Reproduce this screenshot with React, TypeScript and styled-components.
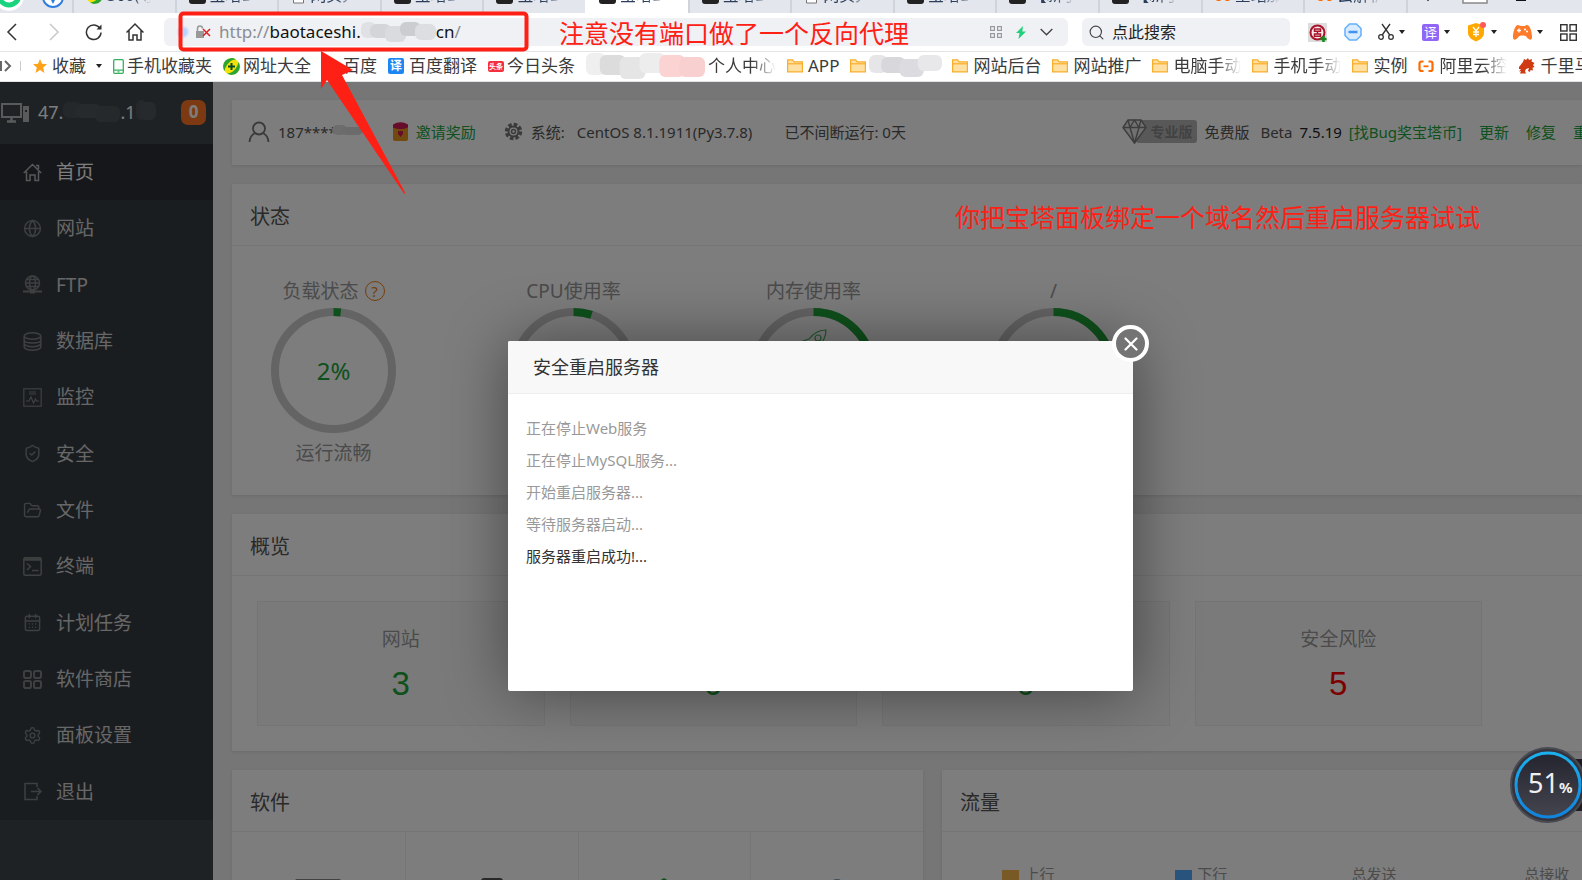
import React from "react";
import styled, { createGlobalStyle, css } from "styled-components";
import {
  Search, Globe, ShieldCheck, FolderOpen, CalendarDays, Settings,
} from "lucide-react";

const Global = createGlobalStyle`
  *, *::before, *::after { box-sizing: border-box; }
  html, body { margin: 0; padding: 0; }
  body {
    font-family: "Noto Sans", "Noto Sans CJK SC", sans-serif;
    font-size: 15px;
    line-height: 20px;
    color: #333;
    background: #fff;
    overflow: hidden;
  }
  button, input { font: inherit; color: inherit; }
  svg { display: block; flex: none; }
`;

const Window = styled.div`
  position: relative;
  display: flex;
  flex-direction: column;
  height: 100vh;
  overflow: hidden;
`;

/* ---------- browser chrome ---------- */

const TabStrip = styled.div`
  flex: none;
  display: flex;
  align-items: flex-end;
  height: 13px;
  overflow: hidden;
  background: #e3e6ec;
`;
const StripStart = styled.div`
  flex: none;
  display: flex;
  align-items: center;
  gap: 17px;
  width: 72px;
  height: 36px;
`;
const TabList = styled.div`
  flex: 1;
  display: flex;
`;
const Tab = styled.button<{ $active?: boolean }>`
  flex: 1 1 0;
  min-width: 0;
  display: flex;
  align-items: center;
  gap: 4px;
  height: 36px;
  padding: 0 0 0 12px;
  border: 0;
  border-left: 2px solid ${(p) => (p.$active ? "#fff" : "#cfd3da")};
  background: ${(p) => (p.$active ? "#fff" : "transparent")};
  color: #2b3f5c;
  font-size: 16px;
  text-align: left;
  white-space: nowrap;
  overflow: hidden;
`;
const TabText = styled.span`
  width: 44px;
  overflow: hidden;
  mask-image: linear-gradient(90deg, #000 60%, transparent);
`;
const StripEnd = styled.div`
  flex: none;
  display: flex;
  align-items: center;
  gap: 26px;
  width: 176px;
  height: 36px;
  padding-left: 12px;
  border-left: 2px solid #cfd3da;
`;

const NavBar = styled.div`
  flex: none;
  display: flex;
  align-items: center;
  height: 39px;
  padding: 0 5px 0 3px;
  border-bottom: 1px solid #e4e4e4;
  background: #fff;
`;
const IconButton = styled.button`
  display: flex;
  align-items: center;
  justify-content: center;
  gap: 5px;
  padding: 0;
  border: 0;
  background: none;
`;
const History = styled.div`
  display: grid;
  grid-template-columns: repeat(4, 41px);
  justify-items: start;
  width: 161px;
`;
const AddressBar = styled.div`
  flex: 1;
  display: flex;
  align-items: center;
  height: 28px;
  padding: 0 15px 0 13px;
  border-radius: 6px;
  background: #eff1f4;
`;
const Url = styled.div`
  flex: 1;
  display: flex;
  align-items: center;
  margin-left: 8px;
  color: #111;
  font-size: 17px;
  line-height: 24px;
`;
const Faint = styled.span`color: #8a8d92;`;
const AddressTools = styled.div`
  display: flex;
  align-items: center;
  gap: 14px;
`;
const SearchBox = styled.label`
  display: flex;
  align-items: center;
  gap: 7px;
  width: 208px;
  height: 28px;
  margin-left: 14px;
  padding-left: 6px;
  border-radius: 6px;
  background: #eff1f4;
`;
const SearchInput = styled.input`
  flex: 1;
  min-width: 0;
  padding: 0;
  border: 0;
  outline: 0;
  background: none;
  font-size: 16px;
  &::placeholder { color: #222; opacity: 1; }
`;
const Extensions = styled.div`
  display: flex;
  align-items: center;
  justify-content: space-between;
  width: 269px;
  margin-left: 18px;
`;
const Badge = styled.span`
  width: 17px;
  height: 17px;
  border-radius: 2px;
  background: #9166f7;
  color: #fff;
  font-size: 13px;
  line-height: 17px;
  text-align: center;
`;

const Bookmarks = styled.nav`
  flex: none;
  display: flex;
  align-items: center;
  gap: 11px;
  height: 30px;
  overflow: hidden;
  padding-bottom: 1px;
  border-bottom: 1px solid #dfe3e6;
  background: #fff;
`;
const BookmarkLead = styled.div`
  flex: none;
  display: flex;
  align-items: center;
  gap: 8px;
  width: 22px;
`;
const Bookmark = styled.a<{ $width?: number; $narrow?: boolean }>`
  flex: none;
  display: flex;
  align-items: center;
  gap: ${(p) => (p.$narrow ? 3 : 5)}px;
  width: ${(p) => (p.$width ? `${p.$width}px` : "auto")};
  color: #3b3b3b;
  font-size: 17px;
  line-height: 28px;
  white-space: nowrap;
  text-decoration: none;
`;
const BookmarkText = styled.span<{ $fade?: boolean }>`
  ${(p) => p.$fade && css`mask-image: linear-gradient(90deg, #000 65%, transparent);`}
`;
const SquareIcon = styled.span<{ $bg: string; $small?: boolean }>`
  width: 16px;
  height: ${(p) => (p.$small ? 11 : 16)}px;
  border-radius: 2px;
  background: ${(p) => p.$bg};
  color: #fff;
  font-size: ${(p) => (p.$small ? 7 : 12)}px;
  font-weight: 700;
  line-height: ${(p) => (p.$small ? 11 : 16)}px;
  text-align: center;
`;

/* ---------- panel ---------- */

const Panel = styled.div`
  position: relative;
  flex: 1;
  display: flex;
  min-height: 0;
  overflow: hidden;
  background: #f0f0f0;
`;
const Sidebar = styled.aside`
  flex: none;
  width: 213px;
  background: #3d474c;
`;
const Host = styled.div`
  display: flex;
  align-items: center;
  height: 62px;
  padding: 0 7px 2px 0;
  color: #fff;
  font-size: 18px;
  line-height: 28px;
`;
const HostName = styled.span`
  flex: 1;
  display: flex;
  align-items: center;
  margin-left: 9px;
`;
const HostCount = styled.span`
  width: 25px;
  height: 25px;
  border-radius: 7px;
  background: #ff7425;
  font-weight: 700;
  font-size: 17px;
  line-height: 24px;
  text-align: center;
`;
const Menu = styled.ul`
  display: grid;
  grid-auto-rows: 1fr;
  height: 676px;
  margin: 0;
  padding: 0;
  list-style: none;
  background: #363c43;
`;
const MenuLink = styled.a<{ $active?: boolean }>`
  display: flex;
  align-items: center;
  gap: 14px;
  height: 100%;
  padding-left: 23px;
  background: ${(p) => (p.$active ? "#2d3036" : "transparent")};
  color: ${(p) => (p.$active ? "#fff" : "#d2d2d2")};
  font-size: 19px;
  line-height: 28px;
  text-decoration: none;
  svg { color: ${(p) => (p.$active ? "#b4b4b4" : "#7e8082")}; }
`;

const Main = styled.main`
  flex: 1;
  display: flex;
  flex-direction: column;
  gap: 19px;
  min-width: 0;
  padding: 18px 0 0 19px;
  white-space: nowrap;
`;
const Card = styled.section`
  flex: none;
  min-width: 0;
  overflow: hidden;
  background: #fff;
  box-shadow: 0 1px 3px rgba(0, 0, 0, 0.1);
`;
const CardTitle = styled.h2`
  margin: 0;
  padding-left: 18px;
  height: 62px;
  border-bottom: 1px solid #eee;
  color: #555;
  font-size: 20px;
  font-weight: 400;
  line-height: 65px;
`;
const InfoBar = styled(Card)`
  display: flex;
  align-items: center;
  height: 65px;
  padding: 0 0 2px 16px;
  color: #555;
`;
const InfoItem = styled.span<{ $gap?: number }>`
  display: flex;
  align-items: center;
  gap: 8px;
  margin-left: ${(p) => p.$gap ?? 0}px;
`;
const Account = styled.span`
  display: flex;
  align-items: center;
  svg { margin-left: -5px; }
`;
const Actions = styled.div`
  display: flex;
  align-items: center;
  gap: 17px;
  margin-left: auto;
  margin-right: -21px;
`;
const Version = styled.span`
  display: flex;
  gap: 7px;
  b { color: #222; font-weight: 400; }
`;
const Edition = styled.span`margin-right: -6px;`;
const GreenLink = styled.a`
  color: #20a53a;
  text-decoration: none;
`;
const ProTag = styled.span`
  position: relative;
  display: flex;
  width: 61px;
  height: 23px;
  margin-right: -10px;
  margin-left: 12px;
  padding-left: 14px;
  border-radius: 3px;
  background: #b4b4b4;
  color: #888;
  font-size: 14px;
  font-weight: 700;
  line-height: 23px;
  svg { position: absolute; left: -14px; top: -1px; }
`;

const Gauges = styled.div`
  display: flex;
  gap: 37px;
  height: 249px;
  padding-top: 32px;
`;
const Gauge = styled.div`
  display: flex;
  flex-direction: column;
  align-items: center;
  width: 203px;
  color: #999;
  font-size: 19px;
  line-height: 26px;
`;
const GaugeLabel = styled.div`
  display: flex;
  align-items: center;
  gap: 6px;
  margin-bottom: 4px;
`;
const Help = styled.button`
  width: 20px;
  height: 20px;
  padding: 0;
  border: 1px solid #e8811a;
  border-radius: 50%;
  background: none;
  color: #e8811a;
  font-size: 15px;
  line-height: 18px;
`;
const Dial = styled.div`
  display: grid;
  place-items: center;
  margin-bottom: 7px;
  > * { grid-area: 1 / 1; }
`;
const DialValue = styled.span`
  color: #20a53a;
  font-size: 24px;
  line-height: 30px;
`;

const Tiles = styled.div`
  display: grid;
  grid-template-columns: repeat(4, minmax(0, 1fr));
  gap: 25px;
  padding: 25px 100px 25px 25px;
`;
const Tile = styled.div`
  display: flex;
  flex-direction: column;
  align-items: center;
  gap: 13px;
  height: 125px;
  padding-top: 23px;
  border: 1px solid #eee;
  background: #f9f9f9;
  color: #999;
  font-size: 19px;
  line-height: 28px;
`;
const TileValue = styled.span<{ $danger?: boolean }>`
  color: ${(p) => (p.$danger ? "#f00" : "#20a53a")};
  font-family: "Liberation Sans", sans-serif;
  font-size: 33px;
  line-height: 36px;
`;

const Split = styled.div`
  display: grid;
  grid-template-columns: 691fr 640fr;
  gap: 19px;
`;
const SoftGrid = styled.div`
  display: grid;
  grid-template-columns: repeat(4, 1fr);
  height: 173px;
`;
const SoftCell = styled.div`
  display: flex;
  justify-content: center;
  padding-top: 46px;
  & + & { border-left: 1px solid #eee; }
`;
const Traffic = styled.div`
  display: grid;
  grid-template-columns: repeat(4, 27%);
  padding-top: 31px;
  color: #999;
  line-height: 22px;
`;
const Legend = styled.span`
  display: flex;
  justify-content: center;
  gap: 5px;
`;
const Swatch = styled.i<{ $color: string }>`
  width: 17px;
  height: 17px;
  margin-top: 7px;
  background: ${(p) => p.$color};
`;

/* ---------- layers ---------- */

const Shade = styled.div`
  position: absolute;
  inset: 0;
  background: rgba(0, 0, 0, 0.51);
`;
const Dialog = styled.section`
  position: absolute;
  top: 259px;
  left: calc(50% - 283px);
  width: 625px;
  height: 350px;
  border-radius: 2px;
  background: #fff;
  box-shadow: 1px 1px 63px rgba(0, 0, 0, 0.45);
`;
const DialogTitle = styled.h3`
  height: 53px;
  margin: 0;
  padding-left: 25px;
  border-bottom: 1px solid #eee;
  border-radius: 2px 2px 0 0;
  background: #f8f8f8;
  font-size: 18px;
  font-weight: 400;
  line-height: 53px;
`;
const Steps = styled.ol`
  margin: 0;
  padding: 18px;
  line-height: 32px;
  list-style: none;
`;
const Step = styled.li<{ $current?: boolean }>`
  color: ${(p) => (p.$current ? "#333" : "#999")};
`;
const Close = styled.button`
  position: absolute;
  top: -16px;
  right: -16px;
  display: grid;
  place-items: center;
  width: 37px;
  height: 37px;
  padding: 0;
  border: 4px solid #fff;
  border-radius: 50%;
  background: #747474;
`;

const Note = styled.p<{ $top: number; $left: number }>`
  position: absolute;
  top: ${(p) => p.$top}px;
  left: ${(p) => p.$left}px;
  margin: 0;
  color: #ff2015;
  font-size: 25px;
  line-height: 36px;
  white-space: nowrap;
`;
const Marks = styled.svg`
  position: absolute;
  top: 0;
  left: 0;
  pointer-events: none;
`;
const Monitor = styled.div`
  position: absolute;
  top: 747px;
  right: -4px;
`;
const MonitorText = styled.div`
  position: absolute;
  top: 19px;
  left: 18px;
  display: flex;
  align-items: baseline;
  color: #f0f0f0;
  font-size: 27px;
  line-height: 34px;
  small { font-size: 15px; font-weight: 700; }
`;

/* ---------- icons ---------- */

const Caret = () => (
  <svg width="6" height="4" viewBox="0 0 6 4"><path d="M0 0h6L3 4z" fill="#222" /></svg>
);
const Folder = () => (
  <svg width="16" height="14" viewBox="0 0 16 14" fill="#ffe0a3" stroke="#f9ae2b" strokeWidth="1.200">
    <path d="M.6 12.900V.8h5l1.500 2h8.300v10.100z" /><path d="M.6 4.800h14.800" />
  </svg>
);
const BtIcon = () => (
  <svg width="17" height="18" viewBox="0 0 17 18"><rect width="17" height="18" rx="3" fill="#222" /><path d="M4 5h9M4 9h9M8 5v9" stroke="#fff" strokeWidth="1.500" /></svg>
);
const PageIcon = () => (
  <svg width="15" height="17" viewBox="0 0 15 17"><path d="M2.500 1h7l3 3v12h-10z" fill="#fff" stroke="#777" /></svg>
);
const CloudIcon = () => (
  <svg width="16" height="13" viewBox="0 0 16 13" fill="none" stroke="#ff6a00" strokeWidth="2.200">
    <path d="M5.500 1.500H3.500a2 2 0 0 0-2 2v5.500a2 2 0 0 0 2 2h2M10.500 1.500h2a2 2 0 0 1 2 2v5.500a2 2 0 0 1-2 2h-2" /><path d="M5.500 6.300h5" strokeWidth="1.800" />
  </svg>
);
const PlusBall = () => (
  <svg width="17" height="17" viewBox="0 0 17 17">
    <circle cx="8.500" cy="8.500" r="8.300" fill="#f6e00a" />
    <path d="M1.500 13A8.300 8.300 0 0 1 13 1.500C8 1.500 3 6 1.500 13M15.500 4a8.300 8.300 0 0 1-11.500 11.500C9 15.500 14 11 15.500 4" fill="#2aa52f" />
    <path d="M8.500 5v7M5 8.500h7" stroke="#064d1b" strokeWidth="2" />
  </svg>
);
const Star = () => (
  <svg width="14" height="14" viewBox="0 0 14 14"><path d="M7 0l2 4.800 5 .4-3.800 3.400L11.400 14 7 11 2.600 14l1.200-5.400L0 5.200l5-.4z" fill="#ffa21a" /></svg>
);
const Phone = () => (
  <svg width="11" height="15" viewBox="0 0 11 15" fill="none" stroke="#35b15e" strokeWidth="1.300"><rect x=".7" y=".7" width="9.600" height="13.600" rx="1" /><path d="M1 11.200h9M4.500 12.900h2" /></svg>
);
const Horse = () => (
  <svg width="17" height="16" viewBox="0 0 17 16"><path d="M1 9l4-5 1-3 2 1 2-2 1 2 3-1-.5 2.500L16.500 5 15 7l1.500 2-2 .8.500 2.700-2.500-.5-.5 2-2-1 1-3-3 1-1 2 1 2.500H2l1-2.500-2 .5 2-2.500H1z" fill="#cf3a12" /></svg>
);
const ScissorsIcon = () => (
  <svg width="16" height="18" viewBox="0 0 16 18" fill="none" stroke="#333" strokeWidth="1.300">
    <circle cx="3" cy="14" r="2.300" /><circle cx="13" cy="14" r="2.300" /><path d="M4.200 12L12 1M11.800 12L4 1" />
  </svg>
);
const Person = () => (
  <svg width="22" height="22" viewBox="0 0 22 22" fill="none" stroke="#777" strokeWidth="1.800">
    <circle cx="11" cy="7.500" r="6" /><path d="M1.500 21c.3-4.500 2.500-7.500 5.500-9M20.500 21c-.3-4.500-2.500-7.500-5.500-9" />
  </svg>
);
const Diamond = () => (
  <svg width="25" height="25" viewBox="0 0 25 25" fill="#e4e4e4" stroke="#7c7c7c" strokeWidth="1.400" strokeLinejoin="round">
    <path d="M6 1h13l5 7.500L12.500 24 1 8.500z" /><path d="M1 8.500h23M6 1l2 7.500L12.500 24 17 8.500 19 1M8 8.500L12.500 1 17 8.500" fill="none" />
  </svg>
);

const line = { fill: "none", stroke: "currentColor", strokeWidth: 1.500 } as const;
const MenuIcon = ({ name }: { name: string }) => {
  const lucide = { size: 19, strokeWidth: 1.800 };
  switch (name) {
    case "home":
      return <svg width="19" height="19" viewBox="0 0 19 19" {...line}><path d="M.8 10L9.500 1.500 18.200 10M3.500 8.500V17.500H7V12h5v5.500h3.500V8.500M13 2.500h2.500V6" /></svg>;
    case "site": return <Globe {...lucide} />;
    case "ftp":
      return <svg width="19" height="19" viewBox="0 0 19 19" {...line}><circle cx="9.500" cy="8" r="7" /><ellipse cx="9.500" cy="8" rx="3" ry="7" /><path d="M2.500 8h14M3.500 4.500h12M3.500 11.500h12" /><path d="M0 16.500h19" strokeWidth="2" /><path d="M7 16.500h5" strokeWidth="4" /></svg>;
    case "db":
      return <svg width="19" height="19" viewBox="0 0 19 19" {...line}><ellipse cx="9.500" cy="4" rx="8.300" ry="3.200" /><path d="M1.200 4v11c0 1.800 3.700 3.200 8.300 3.200s8.300-1.400 8.300-3.200V4M1.200 8c0 1.800 3.700 3 8.300 3s8.300-1.200 8.300-3M1.200 11.500c0 1.800 3.700 3.200 8.300 3.200s8.300-1.400 8.300-3.200" /></svg>;
    case "monitor":
      return <svg width="19" height="19" viewBox="0 0 19 19" {...line} strokeWidth={1.200}><rect x=".8" y=".8" width="17.400" height="17.400" /><path d="M3 13h3l2-4 2.500 6 2-4 1 2H16M6 4h7M6 6h7" /></svg>;
    case "shield": return <ShieldCheck {...lucide} />;
    case "file": return <FolderOpen {...lucide} />;
    case "terminal":
      return <svg width="19" height="19" viewBox="0 0 19 19" {...line}><rect x=".8" y=".8" width="17.400" height="17.400" rx="1.500" /><path d="M1 2.500h17" strokeWidth="2.500" /><path d="M4 6.500l3.500 3L4 13M9 13.500h6.500" /></svg>;
    case "cron": return <CalendarDays {...lucide} />;
    case "store":
      return <svg width="19" height="19" viewBox="0 0 19 19" {...line} strokeWidth={2}><rect x="1" y="1" width="7" height="7" rx="1.800" /><rect x="11" y="1" width="7" height="7" rx="1.800" /><rect x="1" y="11" width="7" height="7" rx="1.800" /><rect x="11" y="11" width="7" height="7" rx="1.800" /></svg>;
    case "settings": return <Settings {...lucide} />;
    default:
      return <svg width="19" height="19" viewBox="0 0 19 19" {...line}><path d="M14 5V1.500H2v16h12V14M8 9.500h10M14.500 6l3.500 3.500-3.500 3.500" /></svg>;
  }
};

const Smudge = ({ width, height, fills }: { width: number; height: number; fills: string[] }) => (
  <svg width={width} height={height} viewBox={`0 0 ${width} ${height}`}>
    {fills.map((fill, i) => {
      const step = width / fills.length;
      return <rect key={i} x={i * step - (i ? 6 : 0)} y={(i % 3) * 2} width={step + (i ? 6 : 0)} height={height - 4 - (i % 2) * 2} rx="6" fill={fill} />;
    })}
  </svg>
);

const DialRing = ({ value }: { value: number }) => {
  const length = 2 * Math.PI * 58.500;
  return (
    <svg width="125" height="125" viewBox="0 0 125 125" fill="none" strokeWidth="8">
      <circle cx="62.500" cy="62.500" r="58.500" stroke="#ccc" />
      <circle cx="62.500" cy="62.500" r="58.500" stroke="#20a53a" strokeDasharray={`${(length * value) / 100} ${length}`} transform="rotate(-90 62.500 62.500)" />
    </svg>
  );
};

/* ---------- data ---------- */

const tabs: [string, string][] = [
  ["ball", "360(导"], ["bt", "宝塔L"], ["page", "网页大"], ["bt", "宝塔L"], ["bt", "宝塔L"], ["bt", "宝塔L"],
  ["bt", "宝塔L"], ["page", "网页大"], ["bt", "宝塔L"], ["bt", "【新手"], ["bt", "【新手"], ["cloud", "全站加"], ["cloud", "云解析"],
];
const tabIcons: Record<string, React.ReactNode> = { ball: <PlusBall />, bt: <BtIcon />, page: <PageIcon />, cloud: <CloudIcon /> };

const menu: [string, string][] = [
  ["home", "首页"], ["site", "网站"], ["ftp", "FTP"], ["db", "数据库"], ["monitor", "监控"], ["shield", "安全"],
  ["file", "文件"], ["terminal", "终端"], ["cron", "计划任务"], ["store", "软件商店"], ["settings", "面板设置"], ["exit", "退出"],
];

const steps = ["正在停止Web服务", "正在停止MySQL服务...", "开始重启服务器...", "等待服务器启动...", "服务器重启成功!..."];

const FolderLink = ({ text, fade }: { text: string; fade?: boolean }) => (
  <Bookmark href="#"><Folder /><BookmarkText $fade={fade}>{text}</BookmarkText></Bookmark>
);

export default function App() {
  return (
    <Window>
      <Global />
      <TabStrip>
        <StripStart>
          <svg width="25" height="36" viewBox="0 0 25 36"><circle cx="9" cy="19" r="15" fill="#fff" /><circle cx="9" cy="18" r="10" fill="none" stroke="#19d37d" strokeWidth="5" /></svg>
          <svg width="24" height="36" viewBox="0 0 24 36"><circle cx="11" cy="20" r="10" fill="#fff" stroke="#2f7de1" strokeWidth="2" /><path d="M11 27l-4-8h8z" fill="#2f7de1" /></svg>
        </StripStart>
        <TabList role="tablist">
          {tabs.map(([icon, text], i) => (
            <Tab key={i} role="tab" aria-selected={i === 5} $active={i === 5}>
              {tabIcons[icon]}<TabText>{text}</TabText>{i === 5 && <svg width="10" height="10" viewBox="0 0 10 10" stroke="#444" strokeWidth="1.500"><path d="M0 0l10 10M10 0L0 10" /></svg>}
            </Tab>
          ))}
        </TabList>
        <StripEnd>
          <svg width="16" height="16" viewBox="0 0 16 16" stroke="#333" strokeWidth="1.500"><path d="M8 0v14M1 7h14" /></svg>
          <svg width="26" height="18" viewBox="0 0 26 18" fill="#fff" stroke="#888" strokeWidth="1.500"><rect x="1" y="1" width="24" height="16" /><path d="M9 5v9M14 5h4v8h-4z" stroke="#333" /></svg>
          <svg width="14" height="14" viewBox="0 0 14 14"><path d="M2 12h10" stroke="#111" strokeWidth="2" /></svg>
        </StripEnd>
      </TabStrip>

      <NavBar>
        <History>
          <IconButton aria-label="后退"><svg width="20" height="20" viewBox="0 0 20 20" fill="none" stroke="#333" strokeWidth="1.500"><path d="M13 2l-8 8 8 8" /></svg></IconButton>
          <IconButton aria-label="前进"><svg width="20" height="20" viewBox="0 0 20 20" fill="none" stroke="#c8c8c8" strokeWidth="1.500"><path d="M6 2l8 8-8 8" /></svg></IconButton>
          <IconButton aria-label="刷新"><svg width="18" height="20" viewBox="0 0 18 20" fill="none" stroke="#333" strokeWidth="1.500"><path d="M15 6.500a7.300 7.300 0 1 0 1 4" /><path d="M16.500 2.500v5h-5z" fill="#333" stroke="none" /></svg></IconButton>
          <IconButton aria-label="主页"><svg width="18" height="20" viewBox="0 0 18 20" fill="none" stroke="#333" strokeWidth="1.500"><path d="M.5 10.500L9 2l8.500 8.500M3 8.500V18h4v-5h4v5h4V8.500" /></svg></IconButton>
        </History>
        <AddressBar>
          <svg width="34" height="18" viewBox="0 0 34 18">
            <circle cx="6" cy="9" r="5.500" fill="#bcd3fb" stroke="#dbe6fb" strokeWidth="2" />
            <path d="M19 8h8v7h-8z" fill="#999" /><path d="M20.500 8V5.500a2.500 2.500 0 0 1 5 0" fill="none" stroke="#999" strokeWidth="1.500" />
            <path d="M26 6l7 7M33 6l-7 7" stroke="#e02020" strokeWidth="1.500" />
          </svg>
          <Url role="textbox" aria-label="网址" tabIndex={0}>
            <Faint>http://</Faint>baotaceshi.
            <Smudge width={75} height={20} fills={["#dfe1e4", "#d3d5d8", "#d9dbde", "#cbcdd0", "#dcdee1"]} />
            <span>cn</span><Faint>/</Faint>
          </Url>
          <AddressTools>
            <svg width="12" height="12" viewBox="0 0 12 12" fill="none" stroke="#999" strokeWidth="1.200"><rect x=".6" y=".6" width="3.800" height="3.800" /><rect x="7.600" y=".6" width="3.800" height="3.800" /><rect x=".6" y="7.600" width="3.800" height="3.800" /><rect x="7.600" y="7.600" width="3.800" height="3.800" /></svg>
            <svg width="10" height="13" viewBox="0 0 10 13"><path d="M7 0L0 7h3.500L2.500 13 10 5.500H6.300z" fill="#21d07a" /></svg>
            <svg width="13" height="8" viewBox="0 0 13 8" fill="none" stroke="#444" strokeWidth="1.400"><path d="M.7 1l5.800 5.700L12.300 1" /></svg>
          </AddressTools>
        </AddressBar>
        <SearchBox>
          <Search size={17} strokeWidth={1.600} color="#444" />
          <SearchInput aria-label="搜索" placeholder="点此搜索" />
        </SearchBox>
        <Extensions>
          <IconButton aria-label="工商银行"><svg width="19" height="19" viewBox="0 0 19 19"><rect width="19" height="19" fill="#ddd" /><circle cx="9.500" cy="9.500" r="7" fill="#f5e9e9" stroke="#a8142c" strokeWidth="2" /><path d="M6.500 6h6v2.200h-6zM6.500 11h6v2.200h-6zM9.500 8.200V11" fill="none" stroke="#a8142c" strokeWidth="1.500" /><path d="M15.500 13v6M12.500 16h6" stroke="#138a1c" strokeWidth="2.500" /></svg></IconButton>
          <IconButton aria-label="拦截"><svg width="18" height="18" viewBox="0 0 18 18"><path d="M5.500 1h7L17 5.500v7L12.500 17h-7L1 12.500v-7z" fill="#d9ecff" stroke="#63aefb" strokeWidth="1.500" /><path d="M4.500 9h9" stroke="#3f93f2" strokeWidth="2.500" /></svg></IconButton>
          <IconButton aria-label="截图"><ScissorsIcon /><Caret /></IconButton>
          <IconButton aria-label="翻译"><Badge>译</Badge><Caret /></IconButton>
          <IconButton aria-label="优惠"><svg width="19" height="20" viewBox="0 0 19 20"><path d="M1 3.500L9 1l8 2.500V11c0 4-4 7-8 8.500C5 18 1 15 1 11z" fill="#ffa800" /><path d="M6 5l3 4 3-4M9 9v6M6 10h6M6 12.500h6" stroke="#fff" strokeWidth="1.300" fill="none" /><circle cx="16" cy="3" r="3" fill="#ff5a5a" /></svg><Caret /></IconButton>
          <IconButton aria-label="游戏"><svg width="19" height="15" viewBox="0 0 19 15"><path d="M5 0q2 1 4.500 1T14 0c3 0 5 7 5 12 0 4-3 3-5 .5-1-1.500-2-2-4.500-2s-3.500.5-4.500 2C3 15 0 16 0 12 0 7 2 0 5 0z" fill="#fd7b2a" /><path d="M6 3.500v4M4 5.500h4" stroke="#fff" strokeWidth="1.300" /><circle cx="12" cy="4.500" r="1" fill="#fff" /><circle cx="14" cy="6.500" r="1" fill="#fff" /></svg><Caret /></IconButton>
          <IconButton aria-label="更多"><svg width="17" height="17" viewBox="0 0 17 17" fill="none" stroke="#333" strokeWidth="1.400"><rect x=".7" y=".7" width="6.300" height="6.300" /><rect x="10" y=".7" width="6.300" height="6.300" /><rect x=".7" y="10" width="6.300" height="6.300" /><rect x="10" y="10" width="6.300" height="6.300" /></svg></IconButton>
        </Extensions>
      </NavBar>

      <Bookmarks>
        <BookmarkLead>
          <svg width="12" height="12" viewBox="0 0 12 12" fill="none" stroke="#666"><path d="M1 1v10" strokeWidth="2" /><path d="M5 1l5 5-5 5" strokeWidth="2" /></svg>
          <svg width="1" height="10"><rect width="1" height="10" fill="#ccc" /></svg>
        </BookmarkLead>
        <Bookmark href="#"><Star /><BookmarkText>收藏</BookmarkText><svg width="11" height="5" viewBox="0 0 11 5"><path d="M5 0h6L8 4z" fill="#222" /></svg></Bookmark>
        <Bookmark href="#" $narrow><Phone /><BookmarkText>手机收藏夹</BookmarkText></Bookmark>
        <Bookmark href="#" $narrow><PlusBall /><BookmarkText>网址大全</BookmarkText></Bookmark>
        <Bookmark href="#"><svg width="16" height="16" viewBox="0 0 16 16" fill="#3b6de0"><ellipse cx="8" cy="11" rx="4.500" ry="4" /><circle cx="3" cy="7" r="2" /><circle cx="13" cy="7" r="2" /><circle cx="6" cy="3" r="2" /><circle cx="10" cy="3" r="2" /></svg><BookmarkText>百度</BookmarkText></Bookmark>
        <Bookmark href="#"><SquareIcon $bg="#1c86f2">译</SquareIcon><BookmarkText>百度翻译</BookmarkText></Bookmark>
        <Bookmark href="#" $narrow><SquareIcon $bg="#f5303d" $small>头条</SquareIcon><BookmarkText>今日头条</BookmarkText></Bookmark>
        <Bookmark href="#" $width={190} $narrow>
          <Smudge width={119} height={26} fills={["#efefef", "#dddcdc", "#e6e5e5", "#eeeded", "#fbd3d3", "#f9d0d0"]} />
          <BookmarkText $fade>个人中心</BookmarkText>
        </Bookmark>
        <FolderLink text="APP" />
        <Bookmark href="#" $width={91} $narrow><Folder /><Smudge width={73} height={22} fills={["#e6e6e8", "#d8d8dc", "#dcdce0", "#e8e8ea"]} /></Bookmark>
        <FolderLink text="网站后台" />
        <FolderLink text="网站推广" />
        <FolderLink text="电脑手动" fade />
        <FolderLink text="手机手动" fade />
        <FolderLink text="实例" />
        <Bookmark href="#"><CloudIcon /><BookmarkText $fade>阿里云控</BookmarkText></Bookmark>
        <Bookmark href="#"><Horse /><BookmarkText>千里马</BookmarkText></Bookmark>
      </Bookmarks>

      <Panel>
        <Sidebar>
          <Host>
            <svg width="29" height="21" viewBox="0 0 29 21" fill="none" stroke="#b8b8b8" strokeWidth="2"><rect x="2" y="2" width="19" height="13" /><path d="M11.500 15v4M7 19.500h9" strokeWidth="2.500" /><rect x="24" y="5" width="4" height="14" fill="#b8b8b8" stroke="#b8b8b8" /><path d="M25 9h2" stroke="#444" /></svg>
            <HostName>47.<Smudge width={57} height={20} fills={["#4c5357", "#50575b", "#4e5559"]} />.1<Smudge width={20} height={24} fills={["#4c5357", "#50575b"]} /></HostName>
            <HostCount>0</HostCount>
          </Host>
          <Menu>
            {menu.map(([icon, text], i) => (
              <li key={icon}><MenuLink href="#" $active={i === 0}><MenuIcon name={icon} />{text}</MenuLink></li>
            ))}
          </Menu>
        </Sidebar>

        <Main>
          <InfoBar>
            <InfoItem><Person /><Account>187****<Smudge width={31} height={14} fills={["#dedede", "#dadada"]} /></Account></InfoItem>
            <InfoItem $gap={30}>
              <svg width="15" height="19" viewBox="0 0 15 19"><rect y="3" width="15" height="16" rx="2" fill="#e8981d" /><path d="M0 2.500Q7.500-2 15 2.500v3Q7.500 9 0 5.500z" fill="#cf1b55" /><path d="M5 9h5v3l-2.500 3L5 12z" fill="#cf1b55" /></svg>
              <GreenLink href="#">邀请奖励</GreenLink>
            </InfoItem>
            <InfoItem $gap={28}>
              <svg width="19" height="19" viewBox="0 0 19 19" fill="none" stroke="#777"><circle cx="9.500" cy="9.500" r="7" strokeWidth="3.500" strokeDasharray="3.500 2" /><circle cx="9.500" cy="9.500" r="5" strokeWidth="2" /><circle cx="9.500" cy="9.500" r="2" strokeWidth="1.500" /></svg>
              系统:
            </InfoItem>
            <InfoItem $gap={12}>CentOS 8.1.1911(Py3.7.8)</InfoItem>
            <InfoItem $gap={32}>已不间断运行: 0天</InfoItem>
            <Actions>
              <ProTag><Diamond />专业版</ProTag>
              <Edition>免费版</Edition>
              <Version>Beta <b>7.5.19</b> <GreenLink href="#">[找Bug奖宝塔币]</GreenLink></Version>
              <GreenLink href="#">更新</GreenLink>
              <GreenLink href="#">修复</GreenLink>
              <GreenLink href="#">重启</GreenLink>
            </Actions>
          </InfoBar>

          <Card>
            <CardTitle>状态</CardTitle>
            <Gauges>
              <Gauge>
                <GaugeLabel>负载状态<Help aria-label="负载状态说明">?</Help></GaugeLabel>
                <Dial><DialRing value={2} /><DialValue>2%</DialValue></Dial>
                运行流畅
              </Gauge>
              <Gauge><GaugeLabel>CPU使用率</GaugeLabel><Dial><DialRing value={5} /></Dial></Gauge>
              <Gauge>
                <GaugeLabel>内存使用率</GaugeLabel>
                <Dial>
                  <DialRing value={30} />
                  <svg width="30" height="84" viewBox="0 0 30 84" fill="none" stroke="#20a53a" strokeWidth="1.200" opacity=".8"><path d="M27 1q-10 0-17 9l-6 2-3 5 5 1 5 5 1 5 5-3 1-6q9-8 9-18z" /><circle cx="19" cy="9" r="3" /></svg>
                </Dial>
              </Gauge>
              <Gauge><GaugeLabel>/</GaugeLabel><Dial><DialRing value={30} /></Dial></Gauge>
            </Gauges>
          </Card>

          <Card>
            <CardTitle>概览</CardTitle>
            <Tiles>
              <Tile>网站<TileValue>3</TileValue></Tile>
              <Tile>FTP<TileValue>0</TileValue></Tile>
              <Tile>数据库<TileValue>0</TileValue></Tile>
              <Tile>安全风险<TileValue $danger>5</TileValue></Tile>
            </Tiles>
          </Card>

          <Split>
            <Card>
              <CardTitle>软件</CardTitle>
              <SoftGrid>
                <SoftCell><svg width="46" height="48" viewBox="0 0 46 48"><rect y="1" width="46" height="40" rx="2" fill="#888" /></svg></SoftCell>
                <SoftCell><svg width="48" height="48" viewBox="0 0 48 48"><rect x="13" y="0" width="22" height="12" rx="3" fill="#555" /></svg></SoftCell>
                <SoftCell><svg width="48" height="48" viewBox="0 0 48 48"><path d="M24 0l20 12v24L24 48 4 36V12z" fill="#20a53a" /></svg></SoftCell>
                <SoftCell><svg width="48" height="48" viewBox="0 0 48 48"><circle cx="24" cy="9" r="8" fill="#7a9aac" /></svg></SoftCell>
              </SoftGrid>
            </Card>
            <Card>
              <CardTitle>流量</CardTitle>
              <Traffic>
                <Legend><Swatch $color="#f7b851" />上行</Legend>
                <Legend><Swatch $color="#52a9ff" />下行</Legend>
                <Legend>总发送</Legend>
                <Legend>总接收</Legend>
              </Traffic>
            </Card>
          </Split>
        </Main>

        <Shade />
        <Dialog role="dialog" aria-labelledby="dialog-title">
          <DialogTitle id="dialog-title">安全重启服务器</DialogTitle>
          <Steps>
            {steps.map((text, i) => <Step key={text} $current={i === steps.length - 1}>{text}</Step>)}
          </Steps>
          <Close aria-label="关闭"><svg width="14" height="14" viewBox="0 0 14 14" stroke="#fff" strokeWidth="2.200" strokeLinecap="round"><path d="M1.500 1.500l11 11M12.500 1.500l-11 11" /></svg></Close>
        </Dialog>
      </Panel>

      <Note $top={15} $left={559}>注意没有端口做了一个反向代理</Note>
      <Note $top={199} $left={955}>你把宝塔面板绑定一个域名然后重启服务器试试</Note>
      <Marks width="540" height="200" viewBox="0 0 540 200">
        <rect x="180.500" y="13.500" width="346" height="36" rx="3" fill="none" stroke="#ff2015" strokeWidth="4" />
        <path d="M321 51L353 70 342 75 405.500 193.500 404 193.500 327 80 321 89z" fill="#ff2015" />
      </Marks>
      <Monitor>
        <svg width="76" height="76" viewBox="0 0 76 76">
          <defs>
            <linearGradient id="face" x1="0" y1="0" x2="0" y2="1"><stop offset="0" stopColor="#24252e" /><stop offset="1" stopColor="#45454f" /></linearGradient>
            <linearGradient id="ring" x1="0" y1="0" x2="0" y2="1"><stop offset="0" stopColor="#1cb0ee" /><stop offset="1" stopColor="#1184dd" /></linearGradient>
          </defs>
          <path d="M60 12h16v52H60z" fill="#1e1e22" />
          <circle cx="38" cy="38" r="37" fill="#33343d" stroke="#4a4a52" strokeWidth="2" />
          <circle cx="38" cy="38" r="32" fill="url(#face)" stroke="url(#ring)" strokeWidth="3" />
        </svg>
        <MonitorText>51<small>%</small></MonitorText>
      </Monitor>
    </Window>
  );
}
